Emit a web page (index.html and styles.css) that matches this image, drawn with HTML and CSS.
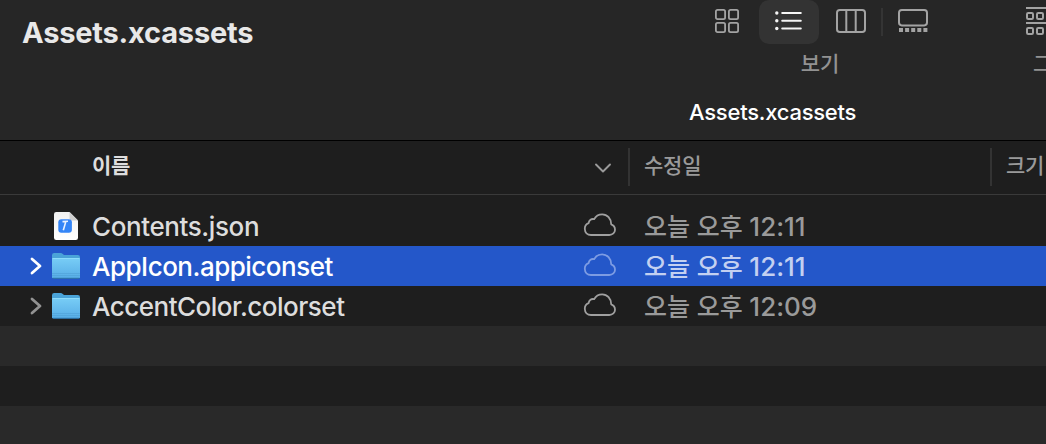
FILE: index.html
```html
<!DOCTYPE html>
<html lang="ko">
<head>
  <meta charset="UTF-8">
  <title>Assets.xcassets</title>
  <link rel="stylesheet" href="styles.css">
</head>
<body>

  <!-- shared icons -->
  <svg class="defs" width="0" height="0">
    <defs>
      <linearGradient id="folderFill" x1="0" y1="0" x2="0" y2="1">
        <stop offset="0" stop-color="#78cdf6"/>
        <stop offset="1" stop-color="#57ade6"/>
      </linearGradient>
      <linearGradient id="paperFill" x1="0" y1="0" x2="0" y2="1">
        <stop offset="0" stop-color="#f1f1f1"/>
        <stop offset="1" stop-color="#ffffff"/>
      </linearGradient>
      <symbol id="cloud" viewBox="0 0 34 24">
        <path d="M8 22H26.3C29.6 22 32 19.6 32 16.7C32 13.9 30.4 12 28.2 11.3C28.2 5.6 24.2 1.3 19.2 1.3C15.5 1.3 12.7 3.2 11.2 6.2C8.4 5.4 5.9 7.2 5.6 10.2C3.3 11 1.8 13.1 1.8 15.8C1.8 19.4 4.4 22 8 22Z" fill="none" stroke="currentColor" stroke-width="1.8" stroke-linejoin="round"/>
      </symbol>
      <symbol id="folder" viewBox="0 0 30 30">
        <path d="M1 27V4.2Q1 2 3.2 2H9.6Q10.8 2 11.8 2.9L13 4H26.8Q29 4 29 6.2V27Z" fill="#4aa3d8"/>
        <path d="M1 8.3Q1 7 2.4 7H27.6Q29 7 29 8.3V25.8Q29 27.5 27.3 27.5H2.7Q1 27.5 1 25.8Z" fill="url(#folderFill)"/>
        <path d="M1.5 7.5H28.5" stroke="#8ddcfb"/>
        <path d="M1 22.5H29M1 24.5H29" stroke="#4b9dd3" stroke-opacity=".65" stroke-width=".8"/>
        <path d="M1.6 27.3H28.4" stroke="#286da3" stroke-width="1"/>
      </symbol>
      <symbol id="arrow" viewBox="0 0 12 18">
        <path d="M2 2L10 9L2 16" fill="none" stroke="currentColor" stroke-width="2.8" stroke-linecap="round" stroke-linejoin="round"/>
      </symbol>
    </defs>
  </svg>

  <div class="window">
    <div class="toolbar">
      <div class="title">Assets.xcassets</div>

      <div class="group views">
        <div class="buttons">
          <div class="button">
            <svg width="26" height="26" viewBox="0 0 26 26" fill="none" stroke="currentColor" stroke-width="1.8">
              <rect x="1.9" y="1.9" width="9.2" height="9.2" rx="1.6"/>
              <rect x="14.9" y="1.9" width="9.2" height="9.2" rx="1.6"/>
              <rect x="1.9" y="14.9" width="9.2" height="9.2" rx="1.6"/>
              <rect x="14.9" y="14.9" width="9.2" height="9.2" rx="1.6"/>
            </svg>
          </div>
          <div class="button active">
            <svg width="28" height="22" viewBox="0 0 28 22" fill="currentColor" stroke="currentColor" stroke-width="2" stroke-linecap="round">
              <path d="M7.2 3H25.8M7.2 10.7H25.8M7.2 18.5H25.8"/>
              <circle cx="1.8" cy="3" r="1.7" stroke="none"/>
              <circle cx="1.8" cy="10.7" r="1.7" stroke="none"/>
              <circle cx="1.8" cy="18.5" r="1.7" stroke="none"/>
            </svg>
          </div>
          <div class="button">
            <svg width="32" height="26" viewBox="0 0 32 26" fill="none" stroke="currentColor" stroke-width="2">
              <rect x="2" y="2" width="28" height="22" rx="2.8"/>
              <path d="M11.3 2V24M20.7 2V24"/>
            </svg>
          </div>
          <div class="split"></div>
          <div class="button">
            <svg width="32" height="26" viewBox="0 0 32 26">
              <rect x="2" y="2" width="28" height="15.4" rx="2.8" fill="none" stroke="currentColor" stroke-width="2"/>
              <path d="M2 22H30.4" stroke="currentColor" stroke-width="4" stroke-dasharray="4 2.1"/>
            </svg>
          </div>
        </div>
        <div class="label">보기</div>
      </div>

      <div class="group sorting">
        <div class="buttons">
          <svg width="40" height="30" viewBox="0 0 40 30" fill="none" stroke="currentColor" stroke-width="2">
            <path d="M0 2H40M0 17H40"/>
            <rect x="1" y="7" width="6" height="6" rx="1.2"/>
            <rect x="11" y="7" width="6" height="6" rx="1.2"/>
            <rect x="21" y="7" width="6" height="6" rx="1.2"/>
            <rect x="1" y="22" width="6" height="6" rx="1.2"/>
            <rect x="11" y="22" width="6" height="6" rx="1.2"/>
            <rect x="21" y="22" width="6" height="6" rx="1.2"/>
          </svg>
        </div>
        <div class="label">그룹</div>
      </div>
    </div>

    <div class="tab">Assets.xcassets</div>

    <div class="columns">
      <div class="col-name">이름</div>
      <svg class="sort" width="18" height="12" viewBox="0 0 18 12">
        <path d="M2 2.5L9 9.5L16 2.5" fill="none" stroke="currentColor" stroke-width="1.9" stroke-linecap="round" stroke-linejoin="round"/>
      </svg>
      <div class="col-date">수정일</div>
      <div class="col-size">크기</div>
    </div>

    <div class="files">
      <div class="row">
        <div class="arrow"></div>
        <svg class="icon" width="30" height="30" viewBox="0 0 30 30">
          <path d="M3 3.2Q3 1 5.2 1H18.5L27 9.5V26.8Q27 29 24.8 29H5.2Q3 29 3 26.8Z" fill="url(#paperFill)"/>
          <path d="M18.5 1V7.3Q18.5 9.5 20.7 9.5H27Z" fill="#cfcfcf"/>
          <rect x="7.3" y="8.2" width="13.6" height="13.6" rx="3" fill="#3485f7"/>
          <path d="M11.5 10.6L17 10.2M14.8 10.6L12.3 19.2" fill="none" stroke="#e9f2ff" stroke-width="1.6"/>
        </svg>
        <div class="name contents">Contents.json</div>
        <svg class="cloud" width="34" height="24"><use href="#cloud"/></svg>
        <div class="date">오늘 오후 <span>12:11</span></div>
      </div>
      <div class="row selected">
        <svg class="arrow" width="12" height="18"><use href="#arrow"/></svg>
        <svg class="icon" width="30" height="30"><use href="#folder"/></svg>
        <div class="name appicon">AppIcon.appiconset</div>
        <svg class="cloud" width="34" height="24"><use href="#cloud"/></svg>
        <div class="date">오늘 오후 <span>12:11</span></div>
      </div>
      <div class="row">
        <svg class="arrow" width="12" height="18"><use href="#arrow"/></svg>
        <svg class="icon" width="30" height="30"><use href="#folder"/></svg>
        <div class="name">AccentColor.colorset</div>
        <svg class="cloud" width="34" height="24"><use href="#cloud"/></svg>
        <div class="date">오늘 오후 <span>12:09</span></div>
      </div>
      <div class="row empty"></div>
      <div class="row"></div>
      <div class="row empty"></div>
    </div>
  </div>

</body>
</html>
```

FILE: styles.css
```css
* {
  box-sizing: border-box;
}

body {
  margin: 0;
  background: #1e1e1e;
  color: #dddddd;
  font-family: Inter, "Noto Sans CJK KR", sans-serif;
  overflow: hidden;
}

svg {
  display: block;
  flex-shrink: 0;
}

.defs {
  position: absolute;
}

.window {
  width: 1046px;
  height: 444px;
  overflow: hidden;
}

/* toolbar */
.toolbar {
  display: flex;
  height: 84px;
  background: #262626;
  overflow: hidden;
}

.title {
  flex-shrink: 0;
  width: 697px;
  padding: 16px 0 0 22px;
  font-size: 29px;
  line-height: 34px;
  font-weight: 700;
  letter-spacing: -0.2px;
  color: #e8e8e8;
}

.group {
  flex-shrink: 0;
  color: #a3a3a3;
}

.views {
  width: 246px;
}

.sorting {
  width: 60px;
  margin-left: 83px;
}

.sorting .buttons {
  padding-bottom: 2px;
}

.buttons {
  display: flex;
  gap: 2px;
  height: 44px;
  align-items: center;
}

.button {
  display: flex;
  width: 60px;
  height: 44px;
  align-items: center;
  justify-content: center;
  padding-bottom: 2px;
}

.active {
  background: #333333;
  border-radius: 10px;
  color: #f5f5f5;
}

.split {
  width: 2px;
  height: 28px;
  margin: 0 -2px 0 -2px;
  background: #343434;
}

.label {
  padding-top: 5px;
  font-size: 21px;
  line-height: 30px;
  font-weight: 500;
  text-align: center;
  color: #929292;
}

.sorting .label {
  padding-left: 7px;
  text-align: left;
}

.tab {
  height: 57px;
  padding: 14px 0 0 689px;
  background: #262626;
  border-bottom: 1px solid #000000;
  font-size: 22px;
  line-height: 28px;
  font-weight: 500;
  letter-spacing: -0.25px;
  color: #ffffff;
}

/* column headers */
.columns {
  display: flex;
  align-items: center;
  height: 54px;
  padding-left: 92px;
  border-bottom: 1px solid #3a3a3a;
  font-size: 21px;
  font-weight: 500;
  line-height: 30px;
  letter-spacing: -0.2px;
  color: #9a9a9a;
}

.col-name {
  width: 502px;
  padding-bottom: 3px;
  font-weight: 700;
  color: #dddddd;
}

.sort {
  margin-right: 16px;
}

.col-date,
.col-size {
  height: 38px;
  margin-bottom: 1px;
  padding-left: 14px;
  border-left: 2px solid #333333;
  line-height: 36px;
  white-space: nowrap;
}

.col-date {
  width: 362px;
  flex-shrink: 0;
}

/* file list */
.files {
  padding-top: 11px;
}

.row {
  display: flex;
  align-items: center;
  height: 40px;
  padding-left: 30px;
  font-size: 26px;
  line-height: 38px;
}

.empty {
  background: #292929;
}

.selected {
  background: #2457c9;
  color: #ffffff;
}

.arrow {
  width: 12px;
  margin-right: 9px;
  color: #929292;
}

.icon {
  margin-right: 11px;
}

.name {
  width: 491px;
  padding-top: 2px;
  letter-spacing: -0.5px;
  font-weight: 450;
  white-space: nowrap;
}

.contents {
  letter-spacing: -0.4px;
}

.cloud {
  margin-right: 26px;
  margin-bottom: 2px;
  color: #a0a0a0;
}

.date {
  padding: 1px 0 0 1px;
  color: #9a9a9a;
  font-size: 25px;
  font-weight: 500;
  white-space: nowrap;
}

.date span {
  font-size: 26px;
  font-weight: 450;
}

.appicon {
  letter-spacing: -0.5px;
  font-weight: 500;
}

.selected .arrow {
  color: #ffffff;
}

.selected .cloud {
  color: #7d9ce3;
}

.selected .date {
  color: #c3d0f1;
}

.selected .date span {
  font-weight: 500;
}
```
